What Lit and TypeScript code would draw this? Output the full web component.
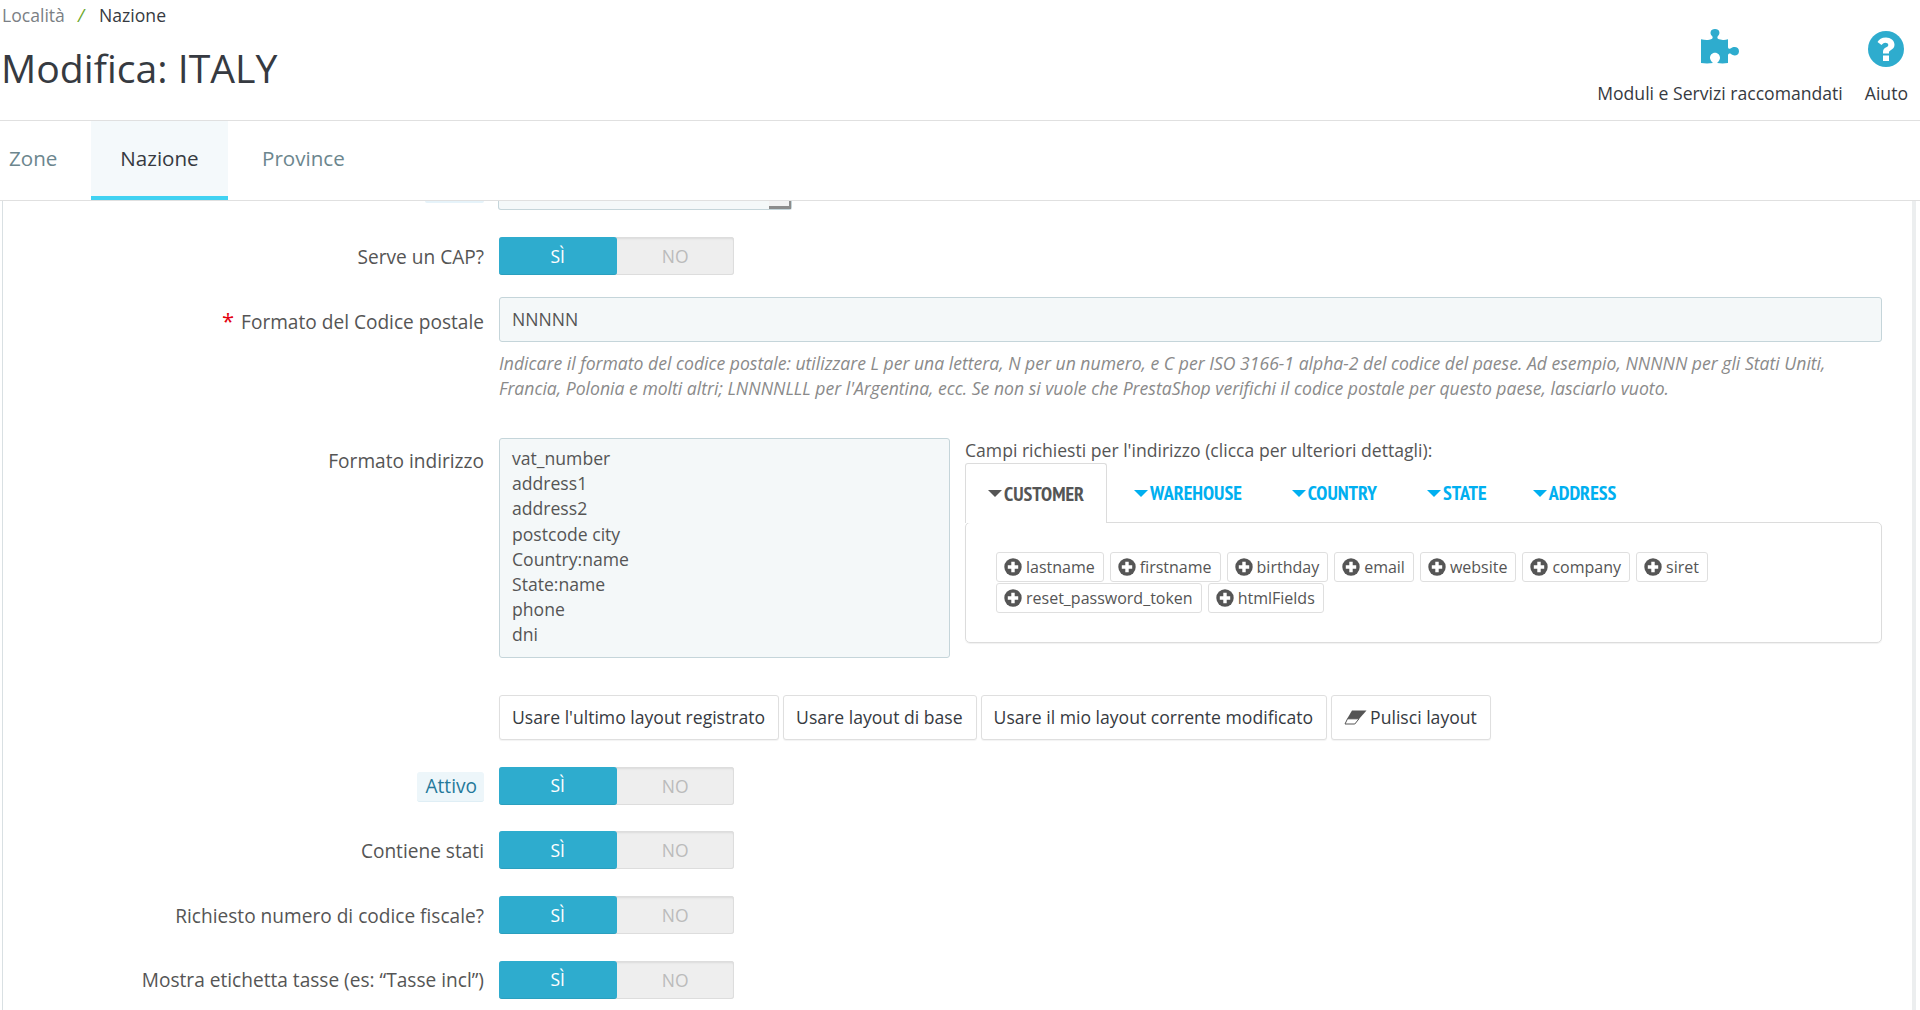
import { LitElement, html, css } from "lit";
import { customElement } from "lit/decorators.js";

const puzzle = html`<svg class="ico puzzle" viewBox="0 0 40 38" width="40" height="36" preserveAspectRatio="none"><path fill="#2eacce" d="M1 12 C5 13 9 13 11 12 C13 11.500 13 9.500 12 8.500 C9.500 6 10 1 15 1 C20 1 20.500 6 18 8.500 C17 9.500 17 11.500 19 12 C23 13 25 13 28 12 L28 20 C28 22 30 22.500 31 21.500 C33.500 19 39 19.500 39 24.500 C39 29.500 33.500 30 31 27.500 C30 26.500 28 27 28 29 L28 37 C24 37.500 21 37.500 17 37 C19 35.500 20 33 20 31.500 C20 28.500 18 26 15 26 C12 26 10 28.500 10 31.500 C10 33 11 35.500 13 37 C9 37.500 5 37.500 1 37 Z"/></svg>`;
const help = html`<svg class="ico" viewBox="0 0 36 36" width="36" height="36"><circle cx="18" cy="18" r="18" fill="#2eacce"/><path fill="#fff" d="M18 6.500 C13.500 6.500 11 8.500 9.500 11 L13.500 14 C14.500 12.700 15.500 11.700 17.300 11.700 C18.800 11.700 20.300 12.500 20.300 14 C20.300 15.300 19.300 15.800 17.800 16.600 C16 17.600 15 18.800 15 21 L15 22.500 L21 22.500 L21 21.500 C21 20.300 21.500 20 23 19 C25 17.800 26.500 16.500 26.500 13.800 C26.500 9.500 22.500 6.500 18 6.500 Z M15 24.500 H21 V30 H15 Z"/></svg>`;
const plus = html`<svg class="plus" viewBox="0 0 18 18" width="18" height="18"><circle cx="9" cy="9" r="8.700" fill="#555"/><path fill="#fff" d="M7.300 3.800 H10.700 V7.300 H14.200 V10.700 H10.700 V14.200 H7.300 V10.700 H3.800 V7.300 H7.300 Z"/></svg>`;
const eraser = html`<svg class="eraser" viewBox="0 0 23 15" width="23" height="15"><path fill="#555" d="M8 0.500 H22.500 L15 9 H3 Z"/><path fill="#fff" stroke="#555" stroke-width="1" d="M3.500 8.800 H15 L10.800 14 H1 Z"/></svg>`;

@customElement("app-toggle")
export class AppToggle extends LitElement {
  static styles = css`
    :host { display: flex; width: 235px; height: 38px; border-radius: 3px; background: #eee; box-shadow: inset 0 0 0 1px #ddd, inset 0 2px 2px rgba(0,0,0,.08); font: 400 17.500px "Open Sans", sans-serif; box-sizing: border-box; }
    .yes, .no { flex: 1 1 50%; display: flex; align-items: center; justify-content: center; }
    .yes { background: #2eacce; color: #fff; border-radius: 3px; border-bottom: 1px solid #2a9fbe; box-sizing: border-box; }
    .no { color: #bbb; }
  `;
  render() { return html`<div class="yes">SÌ</div><div class="no">NO</div>`; }
}

const fields1 = ["lastname", "firstname", "birthday", "email", "website", "company", "siret"];
const fields2 = ["reset_password_token", "htmlFields"];
const tabs2 = ["WAREHOUSE", "COUNTRY", "STATE", "ADDRESS"];
const addressLines = ["vat_number", "address1", "address2", "postcode city", "Country:name", "State:name", "phone", "dni"];

@customElement("app-root")
export class AppRoot extends LitElement {
  static styles = css`
    :host { display: block; height: 1010px; overflow: hidden; background: #fff; color: #363a41; font: 400 17.600px/1.4 "Open Sans", sans-serif; }
    .head { height: 120px; border-bottom: 1px solid #e0e0e0; display: flex; justify-content: space-between; }
    .bc { font-size: 17.600px; line-height: 22px; padding: 4px 0 0 2px; color: #363a41; }
    .bc .l { color: #7b7f85; }
    .bc .s { color: #6aa72c; margin: 0 15px 0 13px; font-style: italic; }
    h1 { margin: 16px 0 0 1px; font-size: 39.200px; font-weight: 400; line-height: 52px; color: #363a41; }
    .actions { display: flex; gap: 22px; padding: 31px 12px 0 0; }
    .action { display: flex; flex-direction: column; align-items: center; font-size: 17.600px; line-height: 22px; color: #363a41; }
    .ico { height: 36px; margin-bottom: 15px; display: block; }
    .puzzle { margin-top: -3px; margin-bottom: 18px; }
    .tabs { display: flex; height: 79px; border-bottom: 1px solid #e0e0e0; font-size: 20.600px; color: #6c868e; }
    .tab { display: flex; align-items: center; height: 75px; border-bottom: 4px solid transparent; }
    .tab.first { padding-left: 9px; width: 82px; }
    .tab.active { background: #f4f9fb; color: #363a41; border-bottom-color: #40d2f2; width: 137px; justify-content: center; }
    .tab.last { padding-left: 34px; }
    .panel { margin: 0 4px 0 2px; border-left: 1px solid #d9e0e3; border-right: 4px solid #eceeef; height: 809px; overflow: hidden; box-sizing: border-box; color: #555; }
    .peek { height: 9px; display: flex; align-items: flex-end; gap: 14px; padding-left: 422px; margin-bottom: 27px; }
    .peek .a { width: 59px; height: 2px; align-self: flex-start; background: #e6f3fa; border-radius: 0 0 3px 3px; }
    .peek .b { width: 294px; height: 9px; display: flex; justify-content: flex-end; background: #f4f8f9; border: 1px solid #c5d5da; border-top: 0; border-radius: 0 0 3px 3px; box-sizing: border-box; }
    .peek .h { width: 22px; height: 8px; background: #f2f2f2; border-bottom: 3px solid #8c8c8c; border-right: 2px solid #8c8c8c; box-sizing: border-box; }
    .row { display: grid; grid-template-columns: 481px 1fr; column-gap: 15px; margin-right: 30px; }
    .lab { text-align: right; align-self: center; font-size: 19.100px; line-height: 26px; padding-top: 1px; }
    .lab.low { padding-top: 5px; }
    .lab .req { color: #e3000f; margin-right: 2px; font-size: 22px; line-height: 1; }
    .hl { background: #edf6fa; color: #25799a; border-radius: 3px; padding: 1px 7px 2px 8px; border-bottom: 1px solid #dfeef5; }
    .input { height: 45px; background: #f4f8f9; border: 1px solid #c5d5da; border-radius: 3px; box-sizing: border-box; display: flex; align-items: center; padding-left: 12px; color: #555; }
    .hint { grid-column: 2; font-style: italic; font-size: 17.600px; line-height: 25px; color: #8a8a8a; margin: 9px 0 0 0; }
    .addr { margin-top: 37px; }
    .addr .lab { align-self: start; padding-top: 10px; }
    .cols { display: flex; gap: 15px; align-items: flex-start; }
    .ta { width: 451px; height: 220px; background: #f4f8f9; border: 1px solid #c5d5da; border-radius: 3px; box-sizing: border-box; padding: 7px 12px; line-height: 25.200px; color: #555; }
    .req-col { flex: 1; min-width: 0; }
    .req-title { line-height: 22px; margin: 1px 0 2px; }
    .subtabs { display: flex; height: 60px; position: relative; z-index: 1; margin-bottom: -1px; font: 700 20px/1 "PT Sans Narrow", "Liberation Sans Narrow", "Liberation Sans", sans-serif; color: #00aff0; }
    .st { display: flex; align-items: center; padding: 0 24px; margin-right: 2px; }
    .st:nth-child(4) { margin-right: -2px; }
    .st.on { color: #555; background: #fff; border: 1px solid #dcdcdc; border-bottom: 0; border-radius: 3px 3px 0 0; box-sizing: border-box; height: 60px; padding: 0 22px; margin-right: 3px; }
    .car { width: 0; height: 0; border-left: 7px solid transparent; border-right: 7px solid transparent; border-top: 7px solid currentColor; margin-right: 2px; }
    .box { border: 1px solid #dcdcdc; border-radius: 5px; height: 121px; box-sizing: border-box; padding: 29px 30px 0; box-shadow: 0 1px 1px rgba(0,0,0,.06); }
    .flds { display: flex; gap: 6px; margin-bottom: 1px; }
    .fld { display: flex; align-items: center; height: 30px; box-sizing: border-box; border: 1px solid #dfdfdf; border-radius: 3px; padding: 0 8px 0 7px; gap: 4px; font-size: 16px; color: #555; background: #fff; }
    .plus { display: block; }
    .btns { display: flex; gap: 4px; margin-top: 37px; }
    .btn { display: flex; align-items: center; gap: 3px; height: 45px; padding: 0 13px 0 12px; border: 1px solid #dfdfdf; border-radius: 3px; box-sizing: border-box; color: #363a41; background: #fff; box-shadow: 0 1px 1px rgba(0,0,0,.05); white-space: nowrap; }
    .tog { margin-top: 26.700px; align-items: center; }
  `;

  toggleRow(label: unknown) {
    return html`<div class="row tog"><div class="lab">${label}</div><app-toggle></app-toggle></div>`;
  }

  render() {
    return html`
      <div class="head">
        <div>
          <div class="bc"><span class="l">Località</span><span class="s">/</span>Nazione</div>
          <h1>Modifica: ITALY</h1>
        </div>
        <div class="actions">
          <div class="action">${puzzle}<span>Moduli e Servizi raccomandati</span></div>
          <div class="action">${help}<span>Aiuto</span></div>
        </div>
      </div>
      <div class="tabs">
        <div class="tab first">Zone</div>
        <div class="tab active">Nazione</div>
        <div class="tab last">Province</div>
      </div>
      <div class="panel">
        <div class="peek"><div class="a"></div><div class="b"><div class="h"></div></div></div>
        ${this.toggleRow("Serve un CAP?")}
        <div class="row" style="margin-top:22px">
          <div class="lab low"><span class="req">*</span> Formato del Codice postale</div>
          <div class="input">NNNNN</div>
          <div class="hint">Indicare il formato del codice postale: utilizzare L per una lettera, N per un numero, e C per ISO 3166-1 alpha-2 del codice del paese. Ad esempio, NNNNN per gli Stati Uniti, Francia, Polonia e molti altri; LNNNNLLL per l'Argentina, ecc. Se non si vuole che PrestaShop verifichi il codice postale per questo paese, lasciarlo vuoto.</div>
        </div>
        <div class="row addr">
          <div class="lab">Formato indirizzo</div>
          <div class="cols">
            <div class="ta">${addressLines.map((l) => html`<div>${l}</div>`)}</div>
            <div class="req-col">
              <div class="req-title">Campi richiesti per l'indirizzo (clicca per ulteriori dettagli):</div>
              <div class="subtabs">
                <div class="st on"><span class="car"></span>CUSTOMER</div>
                ${tabs2.map((t) => html`<div class="st"><span class="car"></span>${t}</div>`)}
              </div>
              <div class="box">
                <div class="flds">${fields1.map((f) => html`<div class="fld">${plus}${f}</div>`)}</div>
                <div class="flds">${fields2.map((f) => html`<div class="fld">${plus}${f}</div>`)}</div>
              </div>
            </div>
          </div>
        </div>
        <div class="row">
          <div></div>
          <div class="btns">
            <div class="btn">Usare l'ultimo layout registrato</div>
            <div class="btn">Usare layout di base</div>
            <div class="btn">Usare il mio layout corrente modificato</div>
            <div class="btn">${eraser}Pulisci layout</div>
          </div>
        </div>
        ${this.toggleRow(html`<span class="hl">Attivo</span>`)}
        ${this.toggleRow("Contiene stati")}
        ${this.toggleRow("Richiesto numero di codice fiscale?")}
        ${this.toggleRow("Mostra etichetta tasse (es: “Tasse incl”)")}
      </div>
    `;
  }
}
